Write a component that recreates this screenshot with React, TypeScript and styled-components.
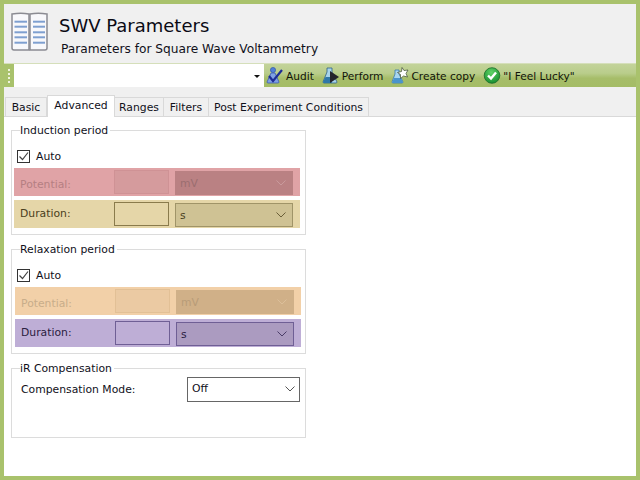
import { FC } from "react";
import styled, { createGlobalStyle } from "styled-components";

const GlobalStyle = createGlobalStyle`
  html, body { margin: 0; padding: 0; background: #a9c26c; }
  body { font-family: "DejaVu Sans", Verdana, sans-serif; font-size: 10.8px; color: #10101a; }
`;

const Frame = styled.div`
  width: 640px;
  height: 480px;
  box-sizing: border-box;
  border: 4px solid #a9c26c;
  background: #fff;
  display: flex;
  flex-direction: column;
  overflow: hidden;
`;

const Header = styled.header`
  height: 59px;
  background: #f0f0f0;
  display: flex;
  gap: 11px;
  padding: 8px 0 0 7px;
  box-sizing: border-box;
  flex: none;
`;

const Titles = styled.div`
  display: flex;
  flex-direction: column;
`;

const Title = styled.h1`
  margin: 2px 0 0;
  font-size: 18px;
  line-height: 24px;
  font-weight: 400;
  color: #0a0a14;
`;

const Subtitle = styled.p`
  margin: 3px 0 0 2px;
  font-size: 12.2px;
  line-height: 16px;
  color: #10101a;
`;

const Toolbar = styled.div`
  height: 24px;
  flex: none;
  display: flex;
  background: #f0f0f0;
  border-top: 1px solid #d5dfba;
  box-sizing: border-box;
`;

const Grip = styled.div`
  width: 10px;
  background: #a9c26c;
  display: flex;
  flex-direction: column;
  align-items: center;
  justify-content: center;
  gap: 2px;
  span { width: 2px; height: 2px; background: #eef3dc; }
`;

const ComboBox = styled.div`
  width: 250px;
  background: #fff;
  display: flex;
  align-items: center;
  justify-content: flex-end;
  padding-right: 4px;
  box-sizing: border-box;
`;

const SmallArrow = styled.span`
  width: 0;
  height: 0;
  border-left: 3px solid transparent;
  border-right: 3px solid transparent;
  border-top: 3px solid #111;
  margin-top: 2px;
`;

const Actions = styled.div`
  flex: 1;
  display: flex;
  align-items: center;
  gap: 8px;
  padding-left: 2px;
  background: linear-gradient(#c3d39a 0, #b9cd8b 40%, #a6bd69 62%, #a4bc66 100%);
  box-sizing: border-box;
`;

const Action = styled.div`
  display: flex;
  align-items: center;
  gap: 2px;
  font-size: 10.6px;
  color: #11140a;
  white-space: nowrap;
`;

const TabArea = styled.div`
  height: 30px;
  flex: none;
  background: #f0f0f0;
  display: flex;
  align-items: flex-end;
  padding-left: 1px;
  border-bottom: 1px solid #d9d9d9;
  box-sizing: border-box;
`;

const Tab = styled.div<{ $active?: boolean; $w: number }>`
  width: ${(p) => p.$w}px;
  height: ${(p) => (p.$active ? 22 : 20)}px;
  padding-bottom: ${(p) => (p.$active ? 3 : 0)}px;
  margin-bottom: -1px;
  display: flex;
  align-items: center;
  justify-content: center;
  background: ${(p) => (p.$active ? "#fff" : "#f0f0f0")};
  border: 1px solid #d9d9d9;
  border-bottom: ${(p) => (p.$active ? "none" : "1px solid #d9d9d9")};
  border-left-width: ${(p) => (p.$active ? 1 : 0)}px;
  box-sizing: border-box;
  white-space: nowrap;
  &:first-child { border-left-width: 1px; }
`;

const Content = styled.main`
  flex: 1;
  background: #fff;
  padding: 7px 0 0 7px;
  display: flex;
  flex-direction: column;
  gap: 8px;
`;

const Group = styled.fieldset<{ $h: number }>`
  width: 295px;
  height: ${(p) => p.$h}px;
  margin: 0;
  padding: 0 0 0 2px;
  box-sizing: border-box;
  border: 1px solid #dcdcdc;
  min-inline-size: 0;
`;

const Legend = styled.legend`
  margin-left: 6px;
  padding: 0 2px 0 0;
  line-height: 13px;
  color: #10101a;
`;

const CheckRow = styled.label`
  display: flex;
  align-items: center;
  gap: 6px;
  height: 14px;
  margin: 12px 0 5px 3px;
`;

const Check = styled.span`
  width: 13px;
  height: 13px;
  border: 1px solid #333;
  box-sizing: border-box;
  background: #fff;
  display: flex;
  svg { display: block; }
`;

const Row = styled.div<{ $bg: string; $nudge?: boolean }>`
  width: 286px;
  height: 28px;
  margin: 0 0 4px ${(p) => (p.$nudge ? 1 : 0)}px;
  background: ${(p) => p.$bg};
  display: flex;
  align-items: center;
  box-sizing: border-box;
  padding-left: 6px;
`;

const RowLabel = styled.span<{ $c: string; $dy: number }>`
  width: 94px;
  color: ${(p) => p.$c};
  transform: translateY(${(p) => p.$dy}px);
`;

const Field = styled.span<{ $bg: string; $line: string }>`
  width: 55px;
  height: 24px;
  margin-right: 6px;
  box-sizing: border-box;
  background: ${(p) => p.$bg};
  border: 1px solid ${(p) => p.$line};
`;

const Select = styled.span<{ $bg: string; $line: string; $c: string }>`
  width: 118px;
  height: 24px;
  box-sizing: border-box;
  background: ${(p) => p.$bg};
  border: 1px solid ${(p) => p.$line};
  color: ${(p) => p.$c};
  display: flex;
  align-items: center;
  justify-content: space-between;
  padding: 0 6px 0 4px;
  transform: translateY(1px);
`;

const CompRow = styled.div`
  display: flex;
  align-items: center;
  justify-content: space-between;
  margin: 2px 4px 0 7px;
  width: 279px;
`;

const CompSelect = styled.span`
  width: 113px;
  height: 25px;
  box-sizing: border-box;
  border: 1px solid #666;
  background: #fff;
  display: flex;
  align-items: center;
  justify-content: space-between;
  padding: 0 4px 2px 4px;
`;

const Chevron: FC<{ c: string }> = ({ c }) => (
  <svg width="10" height="6" viewBox="0 0 10 6" fill="none">
    <path d="M0.5 0.5 L5 5 L9.5 0.5" stroke={c} strokeWidth="1" />
  </svg>
);

const CheckMark = () => (
  <svg width="11" height="11" viewBox="0 0 11 11" fill="none">
    <path d="M1.5 5.5 L4.5 8.5 L10 1.5" stroke="#444" strokeWidth="1.2" />
  </svg>
);

const BookIcon = () => (
  <svg width="37" height="39" viewBox="0 0 37 39">
    <path d="M1 2 Q10 0.5 18 2 V38 H3 Q1 38 1 36 Z" fill="#f8f8fb" stroke="#8b8b92" strokeWidth="1.5" />
    <path d="M19 2 Q27 0.5 36 2 V36 Q36 38 34 38 H19 Z" fill="#f8f8fb" stroke="#8b8b92" strokeWidth="1.5" />
    {[9.7, 14.7, 20.3, 25.3, 30.7].map((y) => (
      <g key={y} stroke="#7e9fd0" strokeWidth="2">
        <path d={`M3.5 ${y} H16`} />
        <path d={`M22 ${y} H34`} />
      </g>
    ))}
  </svg>
);

const AuditIcon = () => (
  <svg width="18" height="17" viewBox="0 0 18 17">
    <circle cx="7" cy="3" r="2.6" fill="#4f7fd6" stroke="#2c4fa8" strokeWidth="0.6" />
    <path d="M5 6 H9 L13 15 Q13 16 12 16 H2 Q1 16 1 15 Z" fill="#7fa0e4" stroke="#3a5ab0" strokeWidth="0.8" />
    <path d="M3 9 L7 14 L16 3" fill="none" stroke="#1d2c94" strokeWidth="2.2" />
  </svg>
);

const PerformIcon = () => (
  <svg width="18" height="17" viewBox="0 0 18 17">
    <path d="M5 1 H10 V5 L15 15 Q15 16 14 16 H2 Q1 16 1 15 L5 5 Z" fill="#a8d4ea" stroke="#2f5f86" strokeWidth="0.8" />
    <path d="M3.5 10 H10 V16 H2 Q1 16 1 15 Z" fill="#2f78a8" />
    <path d="M8 4 L17 10 L8 16 Z" fill="#25252b" />
  </svg>
);

const CopyIcon = () => (
  <svg width="18" height="17" viewBox="0 0 18 17">
    <path d="M4 3 H8 V7 L12 15 Q12 16 11 16 H2 Q1 16 1 15 L4 7 Z" fill="#a9d6f0" stroke="#3a78b0" strokeWidth="0.8" />
    <path d="M3 11 H10 L12 16 H1 Z" fill="#4a94cc" />
    <path d="M11 0.5 L13 3.5 L17 3 L15 6.5 L16.5 10 L12.5 9 L9.5 11.5 L9.5 7.5 L6.5 5.5 L10.5 4.5 Z" fill="#fff" stroke="#3c4a30" strokeWidth="0.7" />
  </svg>
);

const LuckyIcon = () => (
  <svg width="18" height="17" viewBox="0 0 18 17">
    <defs>
      <radialGradient id="lucky" cx="45%" cy="30%" r="75%">
        <stop offset="0" stopColor="#5fd266" />
        <stop offset="1" stopColor="#118a2c" />
      </radialGradient>
    </defs>
    <circle cx="9" cy="8.5" r="7.8" fill="url(#lucky)" stroke="#1a6b2a" strokeWidth="0.8" />
    <path d="M5 8.5 L8 11.5 L13 5.5" fill="none" stroke="#fff" strokeWidth="2.4" />
  </svg>
);

type RowColors = {
  bg: string;
  field: string;
  line: string;
  select: string;
  selectLine: string;
  label: string;
  text: string;
  arrow: string;
};

const PeriodGroup: FC<{
  title: string;
  top: RowColors;
  bottom: RowColors;
  nudge?: boolean;
}> = ({ title, top, bottom, nudge }) => (
  <Group $h={111}>
    <Legend>{title}</Legend>
    <CheckRow>
      <Check>
        <CheckMark />
      </Check>
      Auto
    </CheckRow>
    <Row $bg={top.bg} $nudge={nudge}>
      <RowLabel $c={top.label} $dy={2}>Potential:</RowLabel>
      <Field $bg={top.field} $line={top.line} />
      <Select $bg={top.select} $line={top.selectLine} $c={top.text}>
        mV
        <Chevron c={top.arrow} />
      </Select>
    </Row>
    <Row $bg={bottom.bg} $nudge={nudge}>
      <RowLabel $c={bottom.label} $dy={-1}>Duration:</RowLabel>
      <Field $bg={bottom.field} $line={bottom.line} />
      <Select $bg={bottom.select} $line={bottom.selectLine} $c={bottom.text}>
        s
        <Chevron c={bottom.arrow} />
      </Select>
    </Row>
  </Group>
);

export default function App() {
  return (
    <>
      <GlobalStyle />
      <Frame>
        <Header>
          <BookIcon />
          <Titles>
            <Title>SWV Parameters</Title>
            <Subtitle>Parameters for Square Wave Voltammetry</Subtitle>
          </Titles>
        </Header>
        <Toolbar>
          <Grip>
            <span />
            <span />
            <span />
            <span />
          </Grip>
          <ComboBox>
            <SmallArrow />
          </ComboBox>
          <Actions>
            <Action>
              <AuditIcon />
              Audit
            </Action>
            <Action>
              <PerformIcon />
              Perform
            </Action>
            <Action>
              <CopyIcon />
              Create copy
            </Action>
            <Action>
              <LuckyIcon />
              "I Feel Lucky"
            </Action>
          </Actions>
        </Toolbar>
        <TabArea>
          <Tab $w={42}>Basic</Tab>
          <Tab $active $w={68}>Advanced</Tab>
          <Tab $w={49}>Ranges</Tab>
          <Tab $w={45}>Filters</Tab>
          <Tab $w={160}>Post Experiment Conditions</Tab>
        </TabArea>
        <Content>
          <PeriodGroup
            title="Induction period"
            top={{ bg: "#e0a3a6", field: "#d59b9d", line: "#cf9295", select: "#ba8183", selectLine: "#ba8183", label: "#b57f82", text: "#9b6e70", arrow: "#c99a9c" }}
            bottom={{ bg: "#e5d6a8", field: "#e5d6a8", line: "#8a7b4c", select: "#cfc294", selectLine: "#a09468", label: "#4a4020", text: "#4a4020", arrow: "#6a5e38" }}
          />
          <PeriodGroup
            title="Relaxation period"
            nudge
            top={{ bg: "#f2d0a8", field: "#ebcaa3", line: "#e2c096", select: "#d0b088", selectLine: "#d0b088", label: "#c8ad8a", text: "#b89c78", arrow: "#dcbf9a" }}
            bottom={{ bg: "#beaed6", field: "#beaed6", line: "#6f5f95", select: "#ab9bc0", selectLine: "#6f5f95", label: "#2a2040", text: "#2a2040", arrow: "#4a3c68" }}
          />
          <Group $h={76}>
            <Legend>iR Compensation</Legend>
            <CompRow>
              <span>Compensation Mode:</span>
              <CompSelect>
                Off
                <Chevron c="#555" />
              </CompSelect>
            </CompRow>
          </Group>
        </Content>
      </Frame>
    </>
  );
}
